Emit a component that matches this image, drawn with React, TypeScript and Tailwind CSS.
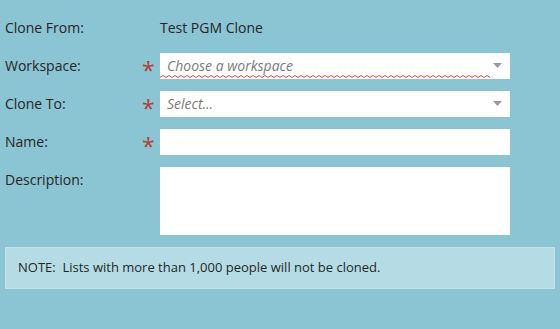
import React from "react";

const font = { fontFamily: '"Open Sans", "Noto Sans", sans-serif' };

function Star() {
  return (
    <div className="w-[20px] h-[26px] relative shrink-0">
      <span className="absolute left-[2px] top-[6px] text-[23px] leading-[22px] text-[#b33c36]">*</span>
    </div>
  );
}

function Arrow() {
  return (
    <svg className="absolute right-[8px] top-[10px]" width="9" height="5" viewBox="0 0 9 5">
      <polygon points="0,0 9,0 4.5,5" fill="#9a9a9a" />
    </svg>
  );
}

export default function App() {
  return (
    <div className="w-[560px] h-[329px] bg-[#8bc4d3] text-[#262626] text-[14px]" style={font}>
      <div className="flex flex-col gap-[12px] pt-[15px] pl-[5px]">
        <div className="flex items-start h-[26px]">
          <div className="w-[135px] leading-[26px]">Clone From:</div>
          <div className="w-[20px]" />
          <div className="leading-[26px]">Test PGM Clone</div>
        </div>
        <div className="flex items-start">
          <div className="w-[135px] leading-[26px]">Workspace:</div>
          <Star />
          <div className="w-[350px] h-[26px] bg-white relative">
            <span className="absolute left-[7px] top-0 leading-[26px] italic text-[#7a7a7a] text-[14px]">Choose a workspace</span>
            <svg className="absolute left-0 top-[22px]" width="330" height="3" viewBox="0 0 330 3">
              <polyline
                fill="none"
                stroke="#d02020"
                strokeWidth="0.8"
                points={Array.from({ length: 111 }, (_, i) => `${i * 3},${i % 2 === 0 ? 2.5 : 0.5}`).join(" ")}
              />
            </svg>
            <Arrow />
          </div>
        </div>
        <div className="flex items-start">
          <div className="w-[135px] leading-[26px]">Clone To:</div>
          <Star />
          <div className="w-[350px] h-[26px] bg-white relative">
            <span className="absolute left-[7px] top-0 leading-[26px] italic text-[#7a7a7a] text-[14px]">Select...</span>
            <Arrow />
          </div>
        </div>
        <div className="flex items-start">
          <div className="w-[135px] leading-[26px]">Name:</div>
          <Star />
          <div className="w-[350px] h-[26px] bg-white" />
        </div>
        <div className="flex items-start">
          <div className="w-[135px] leading-[26px]">Description:</div>
          <div className="w-[20px]" />
          <div className="w-[350px] h-[68px] bg-white" />
        </div>
        <div className="w-[550px] h-[42px] bg-[#b5dce5] border border-[#c3e3ea] flex items-center pl-[12px] text-[13px]">
          NOTE:&nbsp; Lists with more than 1,000 people will not be cloned.
        </div>
      </div>
    </div>
  );
}
